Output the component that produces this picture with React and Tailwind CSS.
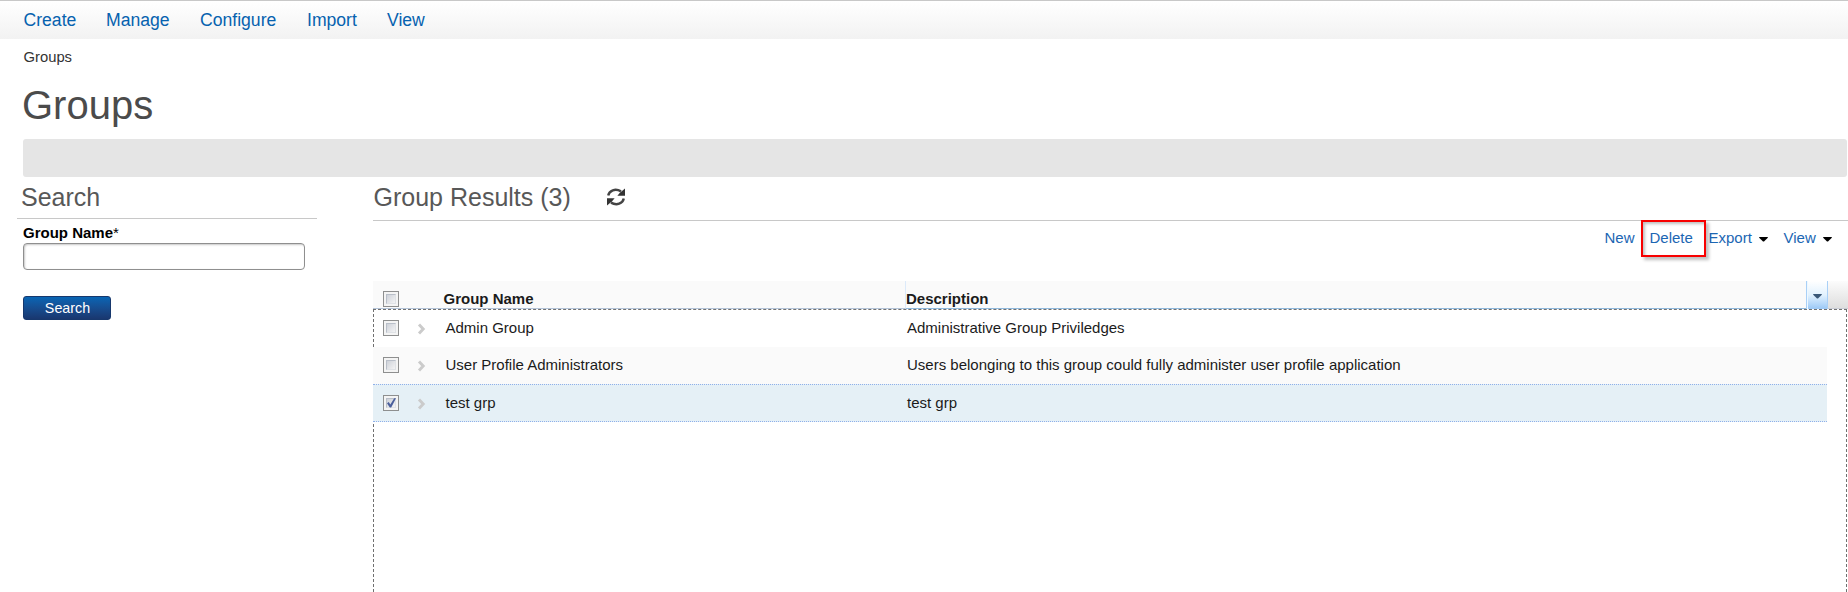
import React from "react";

const menus = [
  { label: "Create", gap: "w-[82.5px]" },
  { label: "Manage", gap: "w-[94px]" },
  { label: "Configure", gap: "w-[107px]" },
  { label: "Import", gap: "w-[80px]" },
  { label: "View", gap: "w-[60px]" },
];

const rows = [
  { name: "Admin Group", description: "Administrative Group Priviledges", style: "h-[37px] pb-px" },
  {
    name: "User Profile Administrators",
    description: "Users belonging to this group could fully administer user profile application",
    style: "h-[37px] pb-px bg-[#fafafa]",
  },
  {
    name: "test grp",
    description: "test grp",
    checked: true,
    style: "h-[38px] bg-[#e5f0f6] border-y border-dotted border-[#8fb0ea]",
  },
];

function Checkbox({ checked }) {
  return (
    <span className="block size-4 shrink-0 border border-[#8e8f8f] bg-[#f4f4f4] p-[2px]">
      <span className="flex size-[10px] border border-t-[#b9bfc9] border-l-[#b9bfc9] border-r-[#dfe2e6] border-b-[#dfe2e6] bg-linear-to-br from-[#ced2d9] to-[#f3f3f4]">
        {checked && (
          <svg viewBox="0 0 10 11" className="-mt-[1px] h-[11px] w-[10px] shrink-0 overflow-visible">
            <path d="M0 5.2 L1.8 4 L3.3 6.6 L7.2 .2 L9 .2 L4.2 9.6 L2.8 9.6 Z" fill="#4b5f9c" />
          </svg>
        )}
      </span>
    </span>
  );
}

function Caret({ className }) {
  return (
    <svg viewBox="0 0 9 5" className={className} fill="currentColor">
      <path d="M.2 0h8.6v.8L5 4.6H4L.2.8z" />
    </svg>
  );
}

function Chevron() {
  return (
    <svg viewBox="0 0 7 10" className="h-[10px] w-[7px] overflow-visible" fill="none" stroke="#cbcbcb" strokeWidth="2.9">
      <path d="M1 .6L5.2 5 1 9.4" />
    </svg>
  );
}

function RefreshIcon() {
  return (
    <svg viewBox="0 0 18 18" className="h-[18px] w-[18px]">
      <path d="M1.2 7.4C2.2 2.6 8.2-.1 14 3.4" fill="none" stroke="#444" strokeWidth="2.4" />
      <path d="M18 .6v7.2h-7.6l2.5-3z" fill="#333" />
      <path d="M16.8 10.6c-1 4.8-7 7.5-12.8 4" fill="none" stroke="#444" strokeWidth="2.4" />
      <path d="M0 17.4v-7.2h7.6l-2.5 3z" fill="#333" />
    </svg>
  );
}

export default function App() {
  return (
    <div className="flex h-[592px] w-[1848px] flex-col overflow-hidden bg-white font-['Liberation_Sans',Arial,sans-serif] text-[15px] leading-5 text-[#1b1b1b]">
      <nav className="flex h-[39px] shrink-0 items-center border-t border-[#c8c8c8] bg-linear-to-b from-white to-[#f2f2f2] pl-[23.5px] text-[17.6px] text-[#0662af]">
        {menus.map((m) => (
          <a key={m.label} className={`${m.gap} shrink-0`}>
            {m.label}
          </a>
        ))}
      </nav>
      <div className="mt-2 h-5 pl-[23.5px] text-[14.8px] text-[#333]">Groups</div>
      <h1 className="mt-4 h-11 pl-[22px] text-[40px] leading-11 text-[#4b4b4b]">Groups</h1>
      <div className="mt-3 mr-px ml-[23px] h-[38px] shrink-0 rounded-[3px] bg-[#e5e5e5]" />

      <div className="flex min-h-0 flex-1">
        <aside className="ml-[17px] w-[300px] shrink-0">
          <h2 className="h-[42px] border-b border-[#c8c8c8] pt-[6px] pl-1 text-[25px] leading-7 text-[#585858]">Search</h2>
          <div className="pl-[6px]">
            <label className="mt-1 block h-5 font-bold leading-5 text-black">
              Group Name<span className="font-normal">*</span>
            </label>
            <input className="block h-[27px] w-[282px] rounded-[4px] border border-[#8f8f8f] bg-white px-2 shadow-[inset_1px_1px_2px_#c8c8c8]" />
            <button className="mt-[26px] flex h-[24px] w-[88px] items-center justify-center rounded-[3px] border border-[#17386d] bg-linear-to-b from-[#0765b4] to-[#19376f] pb-px pl-px text-[14.3px] text-white">
              Search
            </button>
          </div>
        </aside>

        <main className="ml-14 flex min-w-0 flex-1 flex-col">
          <div className="flex h-11 shrink-0 border-b border-[#c8c8c8] pt-[6px]">
            <h2 className="w-[234px] pl-[0.5px] text-[25px] leading-7 text-[#585858]">Group Results (3)</h2>
            <div className="pt-[5px]">
              <RefreshIcon />
            </div>
          </div>
          <div className="flex h-[60px] shrink-0 pt-[7px] text-[#1b66b3]">
            <span className="ml-auto w-[45px] shrink-0">New</span>
            <span className="relative w-[59px] shrink-0">
              Delete
              <span className="absolute -top-2 -left-[8.5px] h-[37px] w-[65px] border-2 border-[#f80000] shadow-[3px_3px_3px_#00000040,inset_2px_2px_3px_#00000040]" />
            </span>
            <span className="flex w-[75px] shrink-0">
              <span className="w-[50.5px]">Export</span>
              <Caret className="mt-[9px] h-[5px] w-[9px] text-black" />
            </span>
            <span className="flex w-[64.5px] shrink-0">
              <span className="w-[39.5px]">View</span>
              <Caret className="mt-[9px] h-[5px] w-[9px] text-black" />
            </span>
          </div>

          <div className="flex h-7 shrink-0 font-bold">
            <div className="flex w-[533px] border-r border-b border-r-[#dceafa] border-b-[#b4c4d8] bg-[#fafafa]">
              <span className="w-[70.5px] pt-[10px] pl-[10px]">
                <Checkbox />
              </span>
              <span className="pt-2">Group Name</span>
            </div>
            <div className="flex-1 border-b border-[#8fb9dd] bg-[#fafafa] pt-2">Description</div>
            <div className="flex w-[22px] justify-center border-x border-[#a9d0f7] bg-linear-to-b from-white via-[#e2f2fe] to-[#9bc8f6] pt-[13px] shadow-[inset_1px_0_#eef8ff]">
              <Caret className="h-[5px] w-[9px] text-[#3a5878]" />
            </div>
            <div className="w-5 border-b border-[#c9cdd6] bg-linear-to-b from-[#fcfcfc] to-[#dedede]" />
          </div>

          <div className="mr-px min-h-0 flex-1 border-x border-t border-dashed border-[#707070]">
            {rows.map((r) => (
              <div key={r.name} className={`-ml-px mr-[19px] flex items-center pl-[10px] ${r.style}`}>
                <span className="w-[35px] shrink-0">
                  <Checkbox checked={r.checked} />
                </span>
                <span className="w-[27.5px] shrink-0 pt-px">
                  <Chevron />
                </span>
                <span className="w-[461.5px] shrink-0">{r.name}</span>
                <span>{r.description}</span>
              </div>
            ))}
          </div>
        </main>
      </div>
    </div>
  );
}
